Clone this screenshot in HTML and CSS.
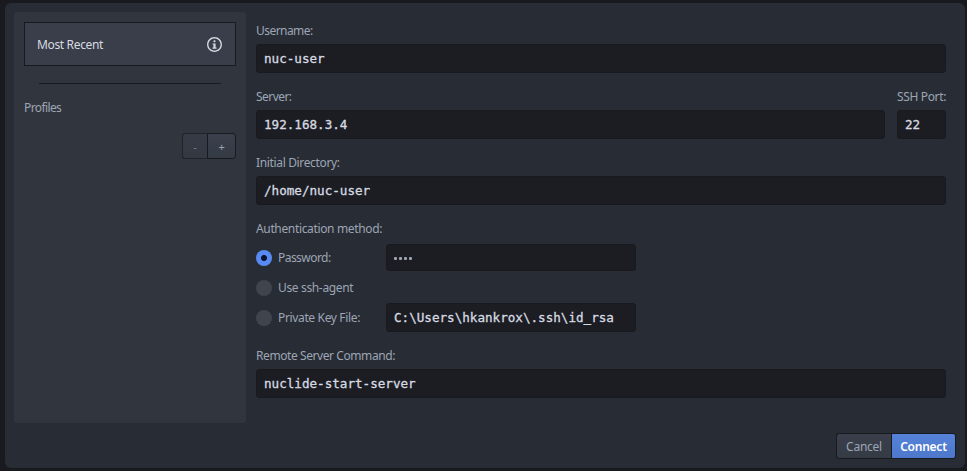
FILE: index.html
```html
<!DOCTYPE html>
<html lang="en">
<head>
<meta charset="utf-8">
<title>Connect to Remote Server</title>
<link rel="stylesheet" href="styles.css">
</head>
<body>
<main class="dialog">
  <div class="content">
    <aside class="sidebar">
      <div class="recent">
        <span class="recent-label">Most Recent</span>
        <svg class="info" viewBox="0 0 14 16" width="15" height="17"><path fill="currentColor" fill-rule="evenodd" d="M6.3 5.69a.942.942 0 0 1-.28-.7c0-.28.09-.52.28-.7.19-.18.42-.28.7-.28.28 0 .52.09.7.28.18.19.28.42.28.7 0 .28-.09.52-.28.7a1 1 0 0 1-.7.3c-.28 0-.52-.11-.7-.3zM8 6.99H5.2v1.1H6v2.8h-.9V12h3.8v-1.1H8zM7 2.3c-3.14 0-5.7 2.54-5.7 5.68 0 3.14 2.56 5.7 5.7 5.7s5.7-2.55 5.7-5.7c0-3.15-2.56-5.69-5.7-5.69v.01zM7 .98c3.86 0 7 3.14 7 7s-3.14 7-7 7-7-3.12-7-7 3.14-7 7-7z"/></svg>
      </div>
      <hr class="rule">
      <div class="profiles">Profiles</div>
      <div class="group profile-buttons">
        <button class="btn small off">-</button><button class="btn small">+</button>
      </div>
    </aside>
    <form class="form">
      <div class="field"><label class="label username">Username:</label><div class="input">nuc-user</div></div>
      <div class="row">
        <div class="field grow"><label class="label server">Server:</label><div class="input">192.168.3.4</div></div>
        <div class="field port"><label class="label">SSH Port:</label><div class="input">22</div></div>
      </div>
      <div class="field"><label class="label">Initial Directory:</label><div class="input">/home/nuc-user</div></div>
      <div class="auth">
        <div class="label">Authentication method:</div>
        <div class="option first"><span class="radio checked"></span><span class="option-label password">Password:</span><div class="input secret"><i></i><i></i><i></i><i></i></div></div>
        <div class="option agent"><span class="radio"></span><span class="option-label">Use ssh-agent</span></div>
        <div class="option"><span class="radio"></span><span class="option-label">Private Key File:</span><div class="input">C:\Users\hkankrox\.ssh\id_rsa</div></div>
      </div>
      <div class="field"><label class="label command">Remote Server Command:</label><div class="input">nuclide-start-server</div></div>
    </form>
  </div>
  <footer class="group actions">
    <button class="btn cancel">Cancel</button><button class="btn primary">Connect</button>
  </footer>
</main>
</body>
</html>
```
FILE: styles.css
```css
* { box-sizing: border-box; }
body {
  margin: 0;
  height: 471px;
  padding: 3px 2px 3px 5px;
  overflow: hidden;
  background: #191a1f;
  color: #9da5b4;
  font: 12px/18px "Noto Sans", "Open Sans", sans-serif;
  letter-spacing: -0.35px;
}
.dialog {
  height: 465px;
  padding: 9px 9px 0;
  border-radius: 6px;
  background: #282c34;
}
.content { display: flex; height: 411px; }
.sidebar {
  width: 232px;
  flex: none;
  padding: 10px;
  border-radius: 3px;
  background: #31353d;
}
.recent {
  height: 44px;
  padding: 0 13px 0 12px;
  display: flex;
  align-items: center;
  justify-content: space-between;
  border: 1px solid #181a1f;
  background: #3a3e4a;
  color: #d7dae0;
}
.recent-label { padding-top: 2px; }
.info { display: block; }
.rule {
  height: 1px;
  margin: 17px 15px 15px;
  border: 0;
  background: #181a1f;
}
.profiles { height: 18px; letter-spacing: -0.6px; }
.group { display: flex; justify-content: flex-end; }
.profile-buttons { margin-top: 16px; }
.btn {
  height: 26px;
  padding: 2px 0 0;
  border: 1px solid #181a1f;
  background: linear-gradient(#3a3f4b, #353b45);
  color: #9da5b4;
  font: inherit;
  letter-spacing: -0.25px;
}
.btn:first-child { border-radius: 3px 0 0 3px; border-right: 0; }
.btn:last-child { border-radius: 0 3px 3px 0; }
.small { width: 29px; font-size: 11px; }
.small.off { width: 25px; opacity: .65; }
.form { flex: 1; padding: 10px 10px 0; }
.field { margin-bottom: 15px; }
.label { display: block; height: 18px; margin-bottom: 4px; white-space: nowrap; }
.username, .server, .password { letter-spacing: -0.55px; }
.command { letter-spacing: -0.42px; }
.input {
  height: 29px;
  padding: 0 7px;
  border: 1px solid #181a1f;
  border-radius: 3px;
  background: #1b1d23;
  color: #d7dae0;
  font: 12.6px/27px "DejaVu Sans Mono", monospace;
  letter-spacing: 0;
  white-space: pre;
  -webkit-text-stroke: 0.3px #d7dae0;
}
.row { display: flex; gap: 12px; }
.grow { flex: 1; }
.port { width: 49px; }
.auth { margin-bottom: 15px; }
.auth .label { margin-bottom: 6px; }
.option { display: flex; align-items: center; }
.option.first { height: 27px; }
.option.agent { height: 32px; padding-top: 1px; }
.radio {
  width: 16px;
  height: 16px;
  flex: none;
  border-radius: 50%;
  background: #40444c;
}
.checked { background: radial-gradient(circle, #0b1430 0 2.6px, #578af2 3.4px); }
.option-label { width: 108px; margin-left: 6px; white-space: nowrap; }
.option .input { width: 250px; }
.secret { height: 27px; display: flex; align-items: center; gap: 2px; }
.secret i { width: 3px; height: 3px; margin-top: 2px; border-radius: 1px; background: #9da5b4; }
.actions { padding-top: 10px; }
.cancel { width: 55px; }
.primary {
  width: 65px;
  background: linear-gradient(#5582d8, #4d78cc);
  color: #fff;
  font-weight: 600;
}
```
